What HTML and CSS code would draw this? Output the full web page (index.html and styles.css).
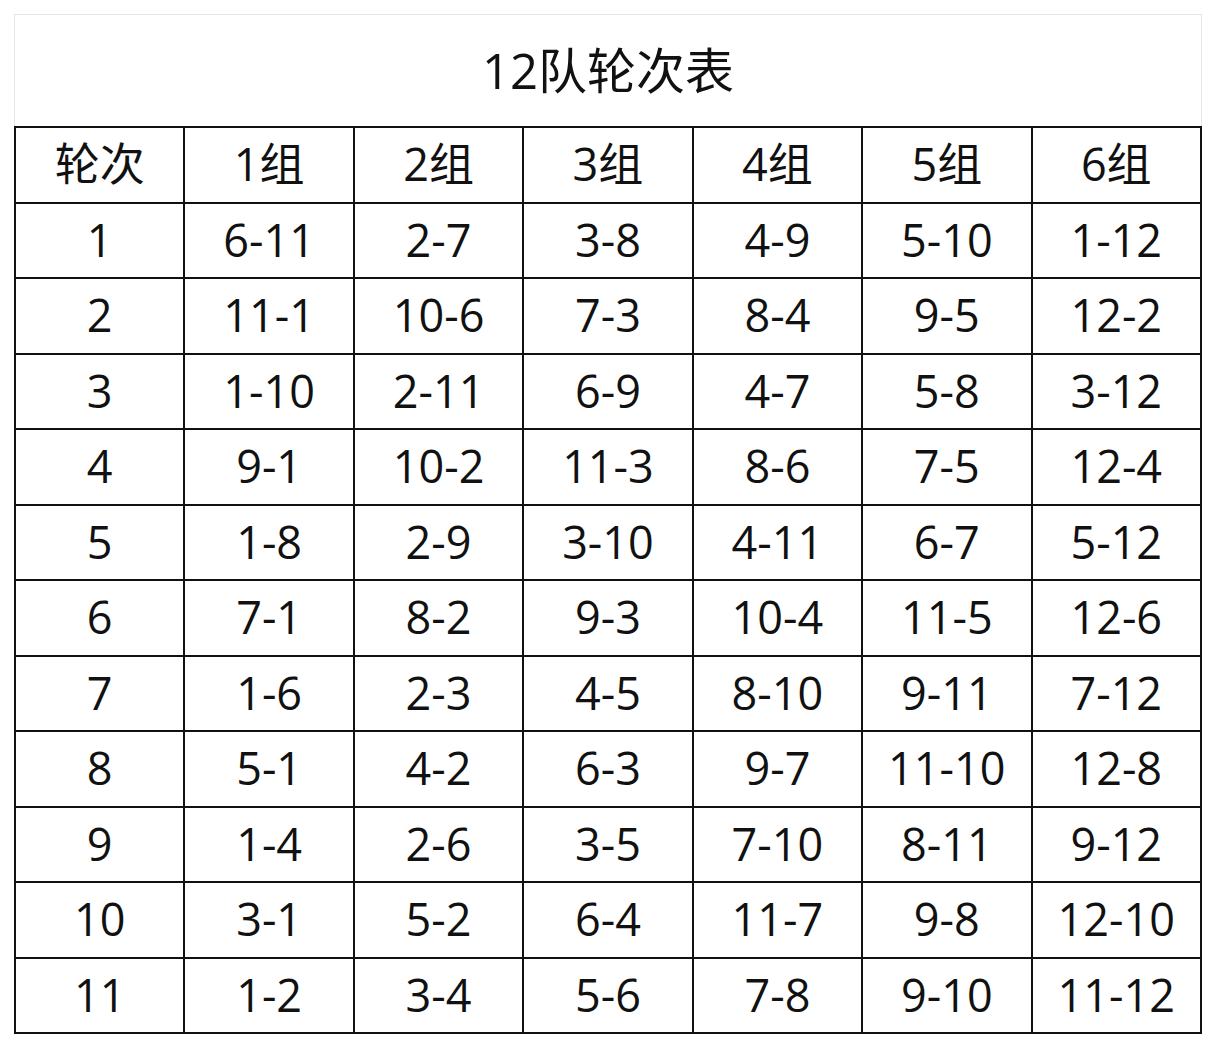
FILE: index.html
```html
<!DOCTYPE html>
<html lang="zh">
<head>
<meta charset="utf-8">
<title>12队轮次表</title>
<link rel="stylesheet" href="styles.css">
</head>
<body>
<div class="sheet">
  <div class="title">12队轮次表</div>
  <table class="grid">
    <colgroup><col><col><col><col><col><col><col></colgroup>
    <tr><td>轮次</td><td>1组</td><td>2组</td><td>3组</td><td>4组</td><td>5组</td><td>6组</td></tr>
    <tr><td>1</td><td>6-11</td><td>2-7</td><td>3-8</td><td>4-9</td><td>5-10</td><td>1-12</td></tr>
    <tr><td>2</td><td>11-1</td><td>10-6</td><td>7-3</td><td>8-4</td><td>9-5</td><td>12-2</td></tr>
    <tr><td>3</td><td>1-10</td><td>2-11</td><td>6-9</td><td>4-7</td><td>5-8</td><td>3-12</td></tr>
    <tr><td>4</td><td>9-1</td><td>10-2</td><td>11-3</td><td>8-6</td><td>7-5</td><td>12-4</td></tr>
    <tr><td>5</td><td>1-8</td><td>2-9</td><td>3-10</td><td>4-11</td><td>6-7</td><td>5-12</td></tr>
    <tr><td>6</td><td>7-1</td><td>8-2</td><td>9-3</td><td>10-4</td><td>11-5</td><td>12-6</td></tr>
    <tr><td>7</td><td>1-6</td><td>2-3</td><td>4-5</td><td>8-10</td><td>9-11</td><td>7-12</td></tr>
    <tr><td>8</td><td>5-1</td><td>4-2</td><td>6-3</td><td>9-7</td><td>11-10</td><td>12-8</td></tr>
    <tr><td>9</td><td>1-4</td><td>2-6</td><td>3-5</td><td>7-10</td><td>8-11</td><td>9-12</td></tr>
    <tr><td>10</td><td>3-1</td><td>5-2</td><td>6-4</td><td>11-7</td><td>9-8</td><td>12-10</td></tr>
    <tr><td>11</td><td>1-2</td><td>3-4</td><td>5-6</td><td>7-8</td><td>9-10</td><td>11-12</td></tr>
  </table>
</div>
</body>
</html>
```
FILE: styles.css
```css
html, body {
  margin: 0;
  padding: 0;
  background: #ffffff;
}
body {
  font-family: "Open Sans", "Noto Sans CJK SC", sans-serif;
  color: #111111;
}
.sheet {
  padding: 14px 0 0 14px;
  width: 1188px;
}
.title {
  box-sizing: border-box;
  height: 112px;
  border: 1px solid #e4e4e4;
  border-bottom: none;
  display: flex;
  align-items: center;
  justify-content: center;
  font-size: 49px;
  padding-bottom: 6px;
}
.grid {
  width: 1188px;
  border-collapse: collapse;
  table-layout: fixed;
  font-size: 45px;
}
.grid tr {
  height: 75.5px;
}
.grid td {
  border: 2px solid #111111;
  text-align: center;
  vertical-align: middle;
  padding: 0 0 2px 0;
  line-height: 1;
}
```
